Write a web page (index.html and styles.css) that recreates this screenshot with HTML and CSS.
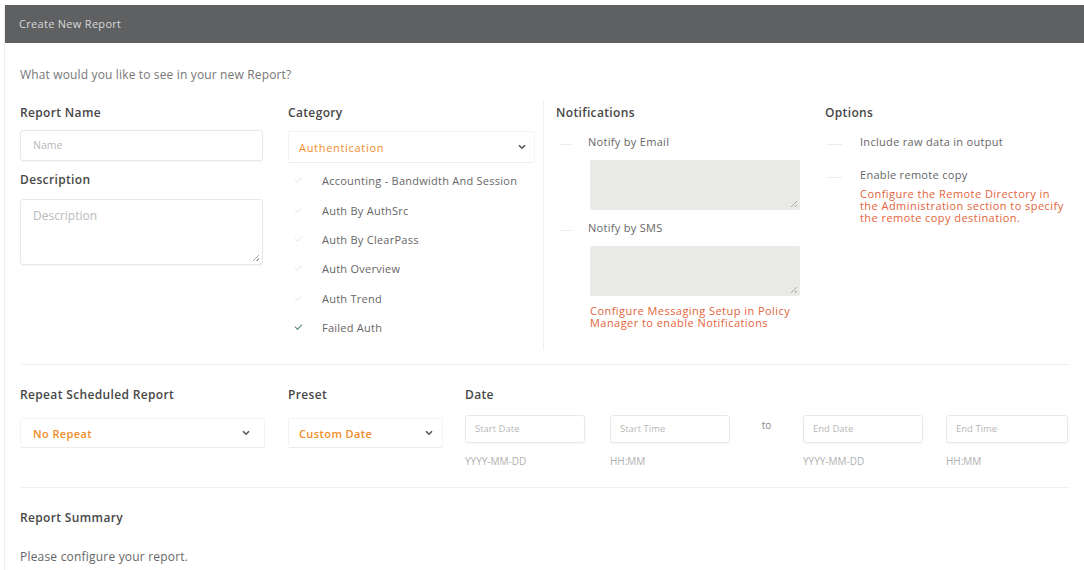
FILE: index.html
```html
<!DOCTYPE html>
<html>
<head>
  <title>Create New Report</title>
  <link rel="stylesheet" href="styles.css">
</head>
<body>

  <div class="panel">
    <div class="panel-head">Create New Report</div>

    <div class="panel-body">
      <p class="intro">What would you like to see in your new Report?</p>

      <div class="top-grid">
        <div class="col">
          <div class="label">Report Name</div>
          <div class="input name-input">Name</div>
          <div class="label desc-label">Description</div>
          <div class="input textarea">Description<span class="grip"></span></div>
        </div>

        <div class="col">
          <div class="label">Category</div>
          <div class="select cat-select">
            <span>Authentication</span>
            <svg class="chev" width="8" height="6" viewBox="0 0 8 6"><path d="M1 1.2 L4 4.2 L7 1.2" fill="none" stroke="#555" stroke-width="1.6"/></svg>
          </div>
          <ul class="checklist">
            <li><span class="tick"></span>Accounting - Bandwidth And Session</li>
            <li><span class="tick"></span>Auth By AuthSrc</li>
            <li><span class="tick"></span>Auth By ClearPass</li>
            <li><span class="tick"></span>Auth Overview</li>
            <li><span class="tick"></span>Auth Trend</li>
            <li class="checked"><span class="tick"></span>Failed Auth</li>
          </ul>
        </div>

        <div class="col col-notify">
          <div class="label">Notifications</div>
          <div class="opt first-opt"><span class="tick"></span>Notify by Email</div>
          <div class="grey-area"><span class="grip"></span></div>
          <div class="opt sms-opt"><span class="tick"></span>Notify by SMS</div>
          <div class="grey-area"><span class="grip"></span></div>
          <p class="note notify-note">Configure Messaging Setup in Policy<br>Manager to enable Notifications</p>
        </div>

        <div class="col col-options">
          <div class="label">Options</div>
          <div class="opt first-opt"><span class="tick"></span>Include raw data in output</div>
          <div class="opt copy-opt"><span class="tick"></span>Enable remote copy</div>
          <p class="note options-note">Configure the Remote Directory in<br>the Administration section to specify<br>the remote copy destination.</p>
        </div>
      </div>

      <div class="divider first-divider"></div>

      <div class="schedule">
        <div>
          <div class="label">Repeat Scheduled Report</div>
          <div class="select repeat-select">
            <span>No Repeat</span>
            <svg class="chev" width="8" height="6" viewBox="0 0 8 6"><path d="M1 1.2 L4 4.2 L7 1.2" fill="none" stroke="#555" stroke-width="1.6"/></svg>
          </div>
        </div>
        <div>
          <div class="label">Preset</div>
          <div class="select preset-select">
            <span>Custom Date</span>
            <svg class="chev" width="8" height="6" viewBox="0 0 8 6"><path d="M1 1.2 L4 4.2 L7 1.2" fill="none" stroke="#555" stroke-width="1.6"/></svg>
          </div>
        </div>
        <div>
          <div class="label">Date</div>
          <div class="date-row">
            <div class="date-field">
              <div class="input small-input">Start Date</div>
              <div class="hint">YYYY-MM-DD</div>
            </div>
            <div class="date-field gap-a">
              <div class="input small-input">Start Time</div>
              <div class="hint">HH:MM</div>
            </div>
            <div class="to">to</div>
            <div class="date-field">
              <div class="input small-input">End Date</div>
              <div class="hint">YYYY-MM-DD</div>
            </div>
            <div class="date-field gap-b">
              <div class="input small-input end-time">End Time</div>
              <div class="hint">HH:MM</div>
            </div>
          </div>
        </div>
      </div>

      <div class="divider second-divider"></div>

      <div class="label summary-label">Report Summary</div>
      <p class="summary-text">Please configure your report.</p>
    </div>
  </div>

</body>
</html>
```

FILE: styles.css
```css
body {
  margin: 0;
  font-family: "Open Sans", "Noto Sans", Arial, sans-serif;
  background: #fff;
  color: #666;
}

.panel {
  margin: 5px 0 0 4px;
  border-left: 1px solid #efefef;
  height: 565px;
  overflow: hidden;
}

.panel-head {
  height: 38px;
  background: #5f6062;
  color: #d8d8d8;
  font-size: 11px;
  letter-spacing: 0.3px;
  line-height: 38px;
  padding-left: 14px;
}

.panel-body {
  padding: 0 14px 0 15px;
}

.intro {
  margin: 24px 0 0;
  font-size: 12px;
  line-height: 16px;
  color: #777;
  letter-spacing: 0.15px;
}

.label {
  font-size: 12px;
  font-weight: 600;
  letter-spacing: 0.35px;
  line-height: 16px;
  color: #474747;
}

.top-grid {
  display: grid;
  grid-template-columns: 268px 255px 282px auto;
  margin-top: 17px;
  min-height: 250px;
}

.col {
  padding-top: 5px;
}

.col-notify {
  border-left: 1px solid #f0f0f0;
  padding-left: 12px;
}

.input {
  box-sizing: border-box;
  border: 1px solid #e8e8e8;
  border-radius: 3px;
  box-shadow: 0 1px 2px rgba(0, 0, 0, 0.04);
  font-size: 10.5px;
  color: #b8b8b8;
  padding-left: 12px;
}

.name-input {
  margin-top: 9px;
  width: 243px;
  height: 31px;
  line-height: 29px;
}

.desc-label {
  margin-top: 11px;
}

.textarea {
  position: relative;
  margin-top: 11px;
  width: 243px;
  height: 66px;
  padding-top: 7px;
  font-size: 12px;
  color: #bbb;
}

.grip {
  position: absolute;
  right: 3px;
  bottom: 3px;
  width: 6px;
  height: 6px;
  background: linear-gradient(135deg, transparent 45%, #aaa 45%, #aaa 55%, transparent 55%, transparent 75%, #aaa 75%, #aaa 85%, transparent 85%);
}

.select {
  box-sizing: border-box;
  display: flex;
  align-items: center;
  justify-content: space-between;
  border: 1px solid #f4f4f4;
  border-bottom-color: #ececec;
  border-radius: 2px;
  padding: 0 8px 0 10px;
  font-size: 11px;
  color: #f08c2a;
}

.cat-select {
  margin-top: 10px;
  width: 247px;
  height: 32px;
  letter-spacing: 0.7px;
}

.checklist {
  list-style: none;
  margin: 3px 0 0;
  padding: 0;
}

.checklist li {
  display: flex;
  align-items: center;
  height: 29.4px;
  font-size: 11px;
  letter-spacing: 0.25px;
  color: #666;
}

.tick {
  display: inline-block;
  width: 6px;
  height: 3px;
  border-left: 1.5px solid #ececec;
  border-bottom: 1.5px solid #ececec;
  transform: rotate(-45deg);
  margin: -3px 20px 0 7px;
}

.checked .tick {
  border-color: #4f7f74;
}

.opt {
  display: flex;
  align-items: center;
  height: 20px;
  font-size: 11px;
  letter-spacing: 0.3px;
  color: #666;
}

.opt .tick {
  width: 12px;
  height: 0;
  border-left: 0;
  transform: none;
  margin: 6px 16px 0 4px;
}

.first-opt {
  margin-top: 10px;
}

.sms-opt {
  margin-top: 7px;
}

.copy-opt {
  margin-top: 13px;
}

.col-options .opt .tick {
  margin: 6px 18px 0 2px;
  width: 15px;
}

.grey-area {
  position: relative;
  margin: 9px 0 0 34px;
  width: 210px;
  height: 50px;
  background: #e9e9e6;
  border-radius: 2px;
}

.note {
  margin: 0;
  font-size: 11px;
  line-height: 12px;
  color: #e3643a;
  letter-spacing: 0.45px;
}

.notify-note {
  margin: 9px 0 0 34px;
}

.options-note {
  margin: 4px 0 0 35px;
}

.divider {
  height: 1px;
  background: #f1f1f1;
}

.first-divider {
  margin-top: 14px;
}

.schedule {
  display: grid;
  grid-template-columns: 268px 177px auto;
  margin-top: 22px;
}

.repeat-select {
  margin-top: 15px;
  width: 245px;
  height: 30px;
  font-weight: 600;
  letter-spacing: 0.4px;
  padding: 0 14px 0 12px;
}

.preset-select {
  margin-top: 15px;
  width: 155px;
  height: 30px;
  font-weight: 600;
  letter-spacing: 0.4px;
  padding-right: 9px;
}

.date-row {
  display: flex;
  margin-top: 12px;
}

.small-input {
  width: 120px;
  height: 28px;
  line-height: 26px;
  font-size: 9.5px;
  padding-left: 9px;
}

.end-time {
  width: 122px;
}

.gap-a {
  margin-left: 25px;
}

.gap-b {
  margin-left: 23px;
}

.to {
  width: 73px;
  text-align: center;
  font-size: 10px;
  color: #888;
  line-height: 20px;
}

.hint {
  margin-top: 11px;
  font-size: 10px;
  line-height: 14px;
  color: #b0b0b0;
}

.second-divider {
  margin-top: 19px;
}

.summary-label {
  margin-top: 22px;
}

.summary-text {
  margin: 23px 0 0;
  font-size: 12px;
  letter-spacing: 0.2px;
  line-height: 16px;
  color: #666;
}
```
